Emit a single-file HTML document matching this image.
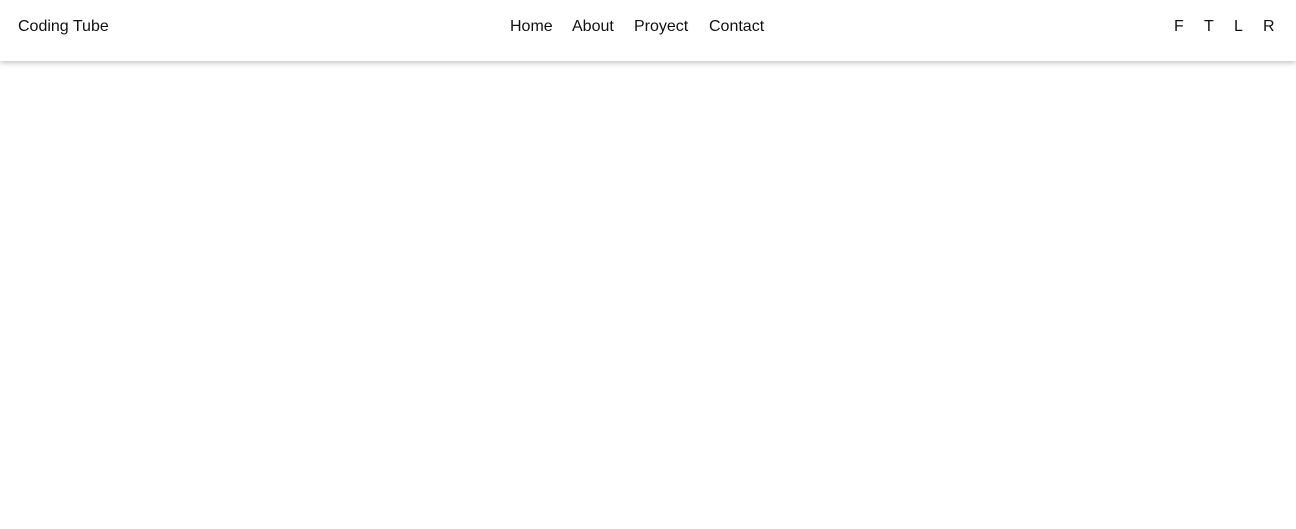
<!DOCTYPE html>
<html><head><meta charset="utf-8"><style>
html,body{margin:0;padding:0;background:#fff;width:1296px;height:529px;overflow:hidden;font-family:"Liberation Sans",Arial,sans-serif;}
header{position:relative;height:61px;background:#fff;box-shadow:0 1px 6px rgba(0,0,0,0.3);}
header span{position:absolute;top:17px;font-size:16px;line-height:19px;color:#111;white-space:nowrap;}
</style></head><body>
<header>
<span style="left:18px">Coding Tube</span>
<span style="left:510px">Home</span>
<span style="left:572px">About</span>
<span style="left:634px">Proyect</span>
<span style="left:709px">Contact</span>
<span style="left:1174px">F</span>
<span style="left:1204px">T</span>
<span style="left:1234px">L</span>
<span style="left:1263px">R</span>
</header>
</body></html>
